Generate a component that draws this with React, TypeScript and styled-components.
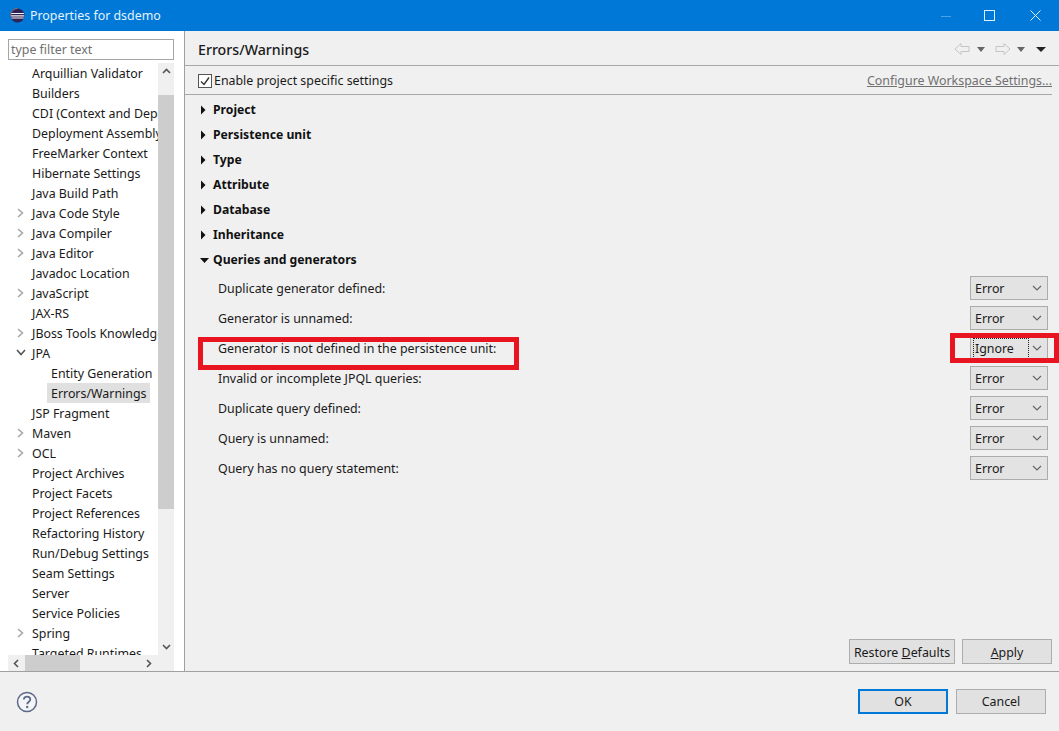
import React from "react";
import styled, { createGlobalStyle } from "styled-components";

const Global = createGlobalStyle`
  html, body { margin: 0; padding: 0; background: #f0f0f0; }
  * { box-sizing: border-box; }
`;
const Window = styled.div`
  position: relative; width: 1059px; height: 731px; overflow: hidden;
  display: flex; flex-direction: column; background: #f0f0f0; color: #1a1a1a;
  font-family: "Noto Sans", "Open Sans", sans-serif; font-size: 12.4px;
`;
const TitleBar = styled.header`
  height: 31px; flex: none; background: #0078d7; color: #fff;
  display: flex; align-items: center; padding: 0 1px 0 10px;
`;
const TitleText = styled.span` margin-left: 5px; color: #e4f2fc; flex: 1; `;
const WinButton = styled.div`
  width: 46px; height: 31px; display: flex; align-items: center; justify-content: center;
`;
const Body = styled.div` flex: 1; display: flex; min-height: 0; `;
const Sidebar = styled.aside`
  width: 185px; flex: none; background: #fff; border-right: 1px solid #a0a0a0;
  padding: 8px 10px 0 8px; display: flex; flex-direction: column;
`;
const Filter = styled.div`
  height: 21px; border: 1px solid #a6a6a6; padding-left: 2px; color: #707070;
  line-height: 19px; flex: none;
`;
const TreeBox = styled.div`
  margin-top: 3px; flex: 1; min-height: 0; display: grid; grid-template-columns: 150px 16px; grid-template-rows: 1fr 16px;
`;
const TreeView = styled.div` overflow: hidden; `;
const TreeRow = styled.div<{ $depth?: number }>`
  height: 20px; display: flex; align-items: center; position: relative; white-space: nowrap;
  padding-left: ${p => (p.$depth ? 43 : 24)}px;
`;
const RowChevron = styled.svg` position: absolute; left: 8px; top: 5px; `;
const Sel = styled.span` background: #e0e0e0; margin-left: -4px; padding: 0 4px; height: 20px; line-height: 21px; `;
const VTrack = styled.div` background: #f0f0f0; display: flex; flex-direction: column; `;
const Thumb = styled.div` background: #cdcdcd; `;
const VThumb = styled(Thumb)` height: 414px; margin-top: 15px; `;
const Arrow = styled.div` height: 17px; display: flex; align-items: center; justify-content: center; flex: none; `;
const VEnd = styled(Arrow)` margin-top: auto; `;
const HTrack = styled.div` grid-column: 1 / 3; background: #f0f0f0; display: flex; align-items: stretch; `;
const HArrow = styled.div` width: 17px; display: flex; align-items: center; justify-content: center; flex: none; `;
const HThumb = styled(Thumb)` width: 55px; `;
const HEnd = styled(HArrow)` margin-left: 60px; `;
const Main = styled.main` flex: 1; min-width: 0; display: flex; flex-direction: column; `;
const PageHead = styled.div`
  height: 35px; border-bottom: 1px solid #a8a8a8; display: flex; align-items: center;
  padding: 2px 13px 0 13px; flex: none;
`;
const PageTitle = styled.h1` margin: 0; font-size: 14.2px; font-weight: 500; flex: 1; `;
const Enable = styled.div`
  height: 29px; margin: 0 7px 0 0; border-bottom: 1px solid #a8a8a8; display: flex; align-items: center; padding: 1px 0 0 13px; flex: none;
`;
const Check = styled.span`
  width: 14px; height: 14px; border: 1px solid #555; background: #fff; display: flex; margin-right: 2px; align-items: center; justify-content: center;
`;
const ConfigLink = styled.a` margin-left: auto; color: #707070; text-decoration: underline; `;
const Content = styled.div` flex: 1; display: flex; flex-direction: column; padding: 2px 0 0 15px; min-height: 0; `;
const Section = styled.div`
  height: 25px; display: flex; align-items: center; font-weight: 700; font-size: 12.2px; color: #111; gap: 3px; flex: none;
`;
const Row = styled.div`
  height: 30px; display: flex; align-items: center; padding: 2px 11px 0 18px; flex: none; justify-content: space-between;
`;
const SelectBox = styled.div`
  width: 78px; height: 24px; background: #e3e3e3; border: 1px solid #acacac; display: flex; align-items: center; padding-left: 4px; position: relative;
`;
const FocusText = styled.span` outline: 1px dotted #222; outline-offset: 1px; width: 52px; height: 17px; line-height: 17px; `;
const Caret = styled.svg` position: absolute; right: 5px; top: 8px; `;
const PageButtons = styled.div` margin-top: auto; display: flex; justify-content: flex-end; gap: 7px; padding: 0 7px 7px 0; `;
const Btn = styled.button<{ $w: number; $primary?: boolean }>`
  width: ${p => p.$w}px; height: 25px; background: #e1e1e1; padding: 0; font: inherit; color: #1a1a1a;
  border: ${p => (p.$primary ? "2px solid #0078d7" : "1px solid #adadad")};
`;
const PageBtn = styled(Btn)` padding-top: 1px; `;
const Footer = styled.footer`
  height: 60px; flex: none; border-top: 1px solid #a0a0a0; display: flex; align-items: center; padding: 0 13px 0 16px; gap: 8px;
`;
const Help = styled.div` margin-right: auto; display: flex; `;
const Annotation = styled.div<{ $x: number; $y: number; $w: number; $h: number }>`
  position: absolute; left: ${p => p.$x}px; top: ${p => p.$y}px; width: ${p => p.$w}px; height: ${p => p.$h}px;
  border: 5px solid #e8141f; pointer-events: none;
`;
const ToolIcons = styled.div` display: flex; align-items: center; `;
const NavIcon = styled.svg<{ $flip?: boolean }>`
  margin-left: ${p => (p.$flip ? 10 : 0)}px;
  transform: ${p => (p.$flip ? "scaleX(-1)" : "none")};
`;
const DropIcon = styled.svg<{ $l: number }>` margin-left: ${p => p.$l}px; `;

const tree: [string, 0 | 1 | 2 | 3][] = [
  ["Arquillian Validator", 0], ["Builders", 0], ["CDI (Context and Dependency", 0], ["Deployment Assembly", 0],
  ["FreeMarker Context", 0], ["Hibernate Settings", 0], ["Java Build Path", 0], ["Java Code Style", 1], ["Java Compiler", 1],
  ["Java Editor", 1], ["Javadoc Location", 0], ["JavaScript", 1], ["JAX-RS", 0], ["JBoss Tools Knowledge", 1], ["JPA", 2],
  ["Entity Generation", 3], ["Errors/Warnings", 3], ["JSP Fragment", 0], ["Maven", 1], ["OCL", 1], ["Project Archives", 0],
  ["Project Facets", 0], ["Project References", 0], ["Refactoring History", 0], ["Run/Debug Settings", 0], ["Seam Settings", 0],
  ["Server", 0], ["Service Policies", 0], ["Spring", 1], ["Targeted Runtimes", 0],
];
const sections = ["Project", "Persistence unit", "Type", "Attribute", "Database", "Inheritance"];
const rows: [string, string][] = [
  ["Duplicate generator defined:", "Error"], ["Generator is unnamed:", "Error"],
  ["Generator is not defined in the persistence unit:", "Ignore"], ["Invalid or incomplete JPQL queries:", "Error"],
  ["Duplicate query defined:", "Error"], ["Query is unnamed:", "Error"], ["Query has no query statement:", "Error"],
];
const Tri = ({ d }: { d: string }) => <svg width="10" height="10" viewBox="0 0 10 10"><path d={d} fill="#111" /></svg>;
const Chevron = ({ d, c = "#555" }: { d: string; c?: string }) => (
  <svg width="9" height="9" viewBox="0 0 9 9"><path d={d} fill="none" stroke={c} strokeWidth="1.6" /></svg>
);
const Nav = ({ flip }: { flip?: boolean }) => (
  <NavIcon $flip={flip} width="16" height="14" viewBox="0 0 16 14">
    <path d="M1 7 7 1.5V4.5H15V9.5H7V12.5Z" fill="#f0f0f0" stroke="#c4c4c4" />
  </NavIcon>
);
const Drop = ({ c, w = 8, l }: { c: string; w?: number; l: number }) => (
  <DropIcon $l={l} width={w} height="5" viewBox={`0 0 ${w} 5`}><path d={`M0 0H${w}L${w / 2} 5Z`} fill={c} /></DropIcon>
);

export default function App() {
  return (
    <Window>
      <Global />
      <TitleBar>
        <svg width="15" height="15" viewBox="0 0 15 15">
          <circle cx="7.5" cy="7.5" r="7" fill="#2c2255" />
          <path d="M1 5.5H14M.8 7.8H14.2M1.4 10H13.6" stroke="#f4f0f0" strokeWidth="1.2" />
          <path d="M7.5 .5a7 7 0 0 0-6.9 7" fill="none" stroke="#c0714f" strokeWidth=".8" />
        </svg>
        <TitleText>Properties for dsdemo</TitleText>
        <WinButton><svg width="16" height="12" viewBox="0 0 16 12"><path d="M6 6.5H16" stroke="#4aa3e6" /></svg></WinButton>
        <WinButton><svg width="11" height="11" viewBox="0 0 11 11"><rect x=".5" y=".5" width="10" height="10" fill="none" stroke="#dff0fb" /></svg></WinButton>
        <WinButton><svg width="11" height="11" viewBox="0 0 11 11"><path d="M.5.5 10.5 10.5M10.5.5.5 10.5" stroke="#dff0fb" /></svg></WinButton>
      </TitleBar>
      <Body>
        <Sidebar>
          <Filter>type filter text</Filter>
          <TreeBox>
            <TreeView>
              {tree.map(([t, k]) => (
                <TreeRow key={t} $depth={k === 3 ? 1 : 0}>
                  {k === 1 && <RowChevron width="9" height="10" viewBox="0 0 9 10"><path d="M2 1 6.5 5 2 9" fill="none" stroke="#a8a8a8" strokeWidth="1.6" /></RowChevron>}
                  {k === 2 && <RowChevron width="10" height="9" viewBox="0 0 10 9"><path d="M1 2 5 6.5 9 2" fill="none" stroke="#555" strokeWidth="1.6" /></RowChevron>}
                  {t === "Errors/Warnings" ? <Sel>{t}</Sel> : t}
                </TreeRow>
              ))}
            </TreeView>
            <VTrack>
              <Arrow><Chevron d="M1 6 4.5 2.5 8 6" /></Arrow>
              <VThumb />
              <VEnd><Chevron d="M1 3 4.5 6.5 8 3" /></VEnd>
            </VTrack>
            <HTrack>
              <HArrow><Chevron d="M6 1 2.5 4.5 6 8" /></HArrow>
              <HThumb />
              <HEnd><Chevron d="M3 1 6.5 4.5 3 8" /></HEnd>
            </HTrack>
          </TreeBox>
        </Sidebar>
        <Main>
          <PageHead>
            <PageTitle>Errors/Warnings</PageTitle>
            <ToolIcons>
              <Nav /><Drop c="#666" l={7} />
              <Nav flip /><Drop c="#666" l={6} />
              <Drop c="#222" w={10} l={11} />
            </ToolIcons>
          </PageHead>
          <Enable>
            <Check>
              <svg width="12" height="12" viewBox="0 0 12 12"><path d="M2 6.5 5 9.5 10 2.5" fill="none" stroke="#333" strokeWidth="1.4" /></svg>
            </Check>
            <span>Enable pro<u>j</u>ect specific settings</span>
            <ConfigLink>Configure Workspace Settings...</ConfigLink>
          </Enable>
          <Content>
            {sections.map(s => <Section key={s}><Tri d="M1 .5 5.5 5 1 9.5Z" />{s}</Section>)}
            <Section><Tri d="M0 3H9L4.5 8Z" />Queries and generators</Section>
            {rows.map(([l, v]) => (
              <Row key={l}>
                <span>{l}</span>
                <SelectBox>
                  {v === "Ignore" ? <FocusText>{v}</FocusText> : v}
                  <Caret width="10" height="7" viewBox="0 0 10 7"><path d="M1 1 5 5 9 1" fill="none" stroke="#666" strokeWidth="1.2" /></Caret>
                </SelectBox>
              </Row>
            ))}
            <PageButtons>
              <PageBtn $w={106}>Restore <u>D</u>efaults</PageBtn>
              <PageBtn $w={90}><u>A</u>pply</PageBtn>
            </PageButtons>
          </Content>
        </Main>
      </Body>
      <Footer>
        <Help>
          <svg width="22" height="22" viewBox="0 0 22 22">
            <circle cx="11" cy="11" r="9.5" fill="#f4f5f8" stroke="#5d6a8a" strokeWidth="1.5" />
            <path d="M7.8 8.5C8 6.5 9.4 5.6 11 5.6 12.9 5.6 14.3 6.8 14.3 8.4 14.3 10.6 11.2 10.8 11.2 13.2" fill="none" stroke="#5d6a8a" strokeWidth="1.8" />
            <circle cx="11.2" cy="16" r="1.2" fill="#5d6a8a" />
          </svg>
        </Help>
        <Btn $w={90} $primary>OK</Btn>
        <Btn $w={90}>Cancel</Btn>
      </Footer>
      <Annotation $x={198} $y={337} $w={321} $h={33} />
      <Annotation $x={950} $y={333} $w={109} $h={30} />
    </Window>
  );
}
